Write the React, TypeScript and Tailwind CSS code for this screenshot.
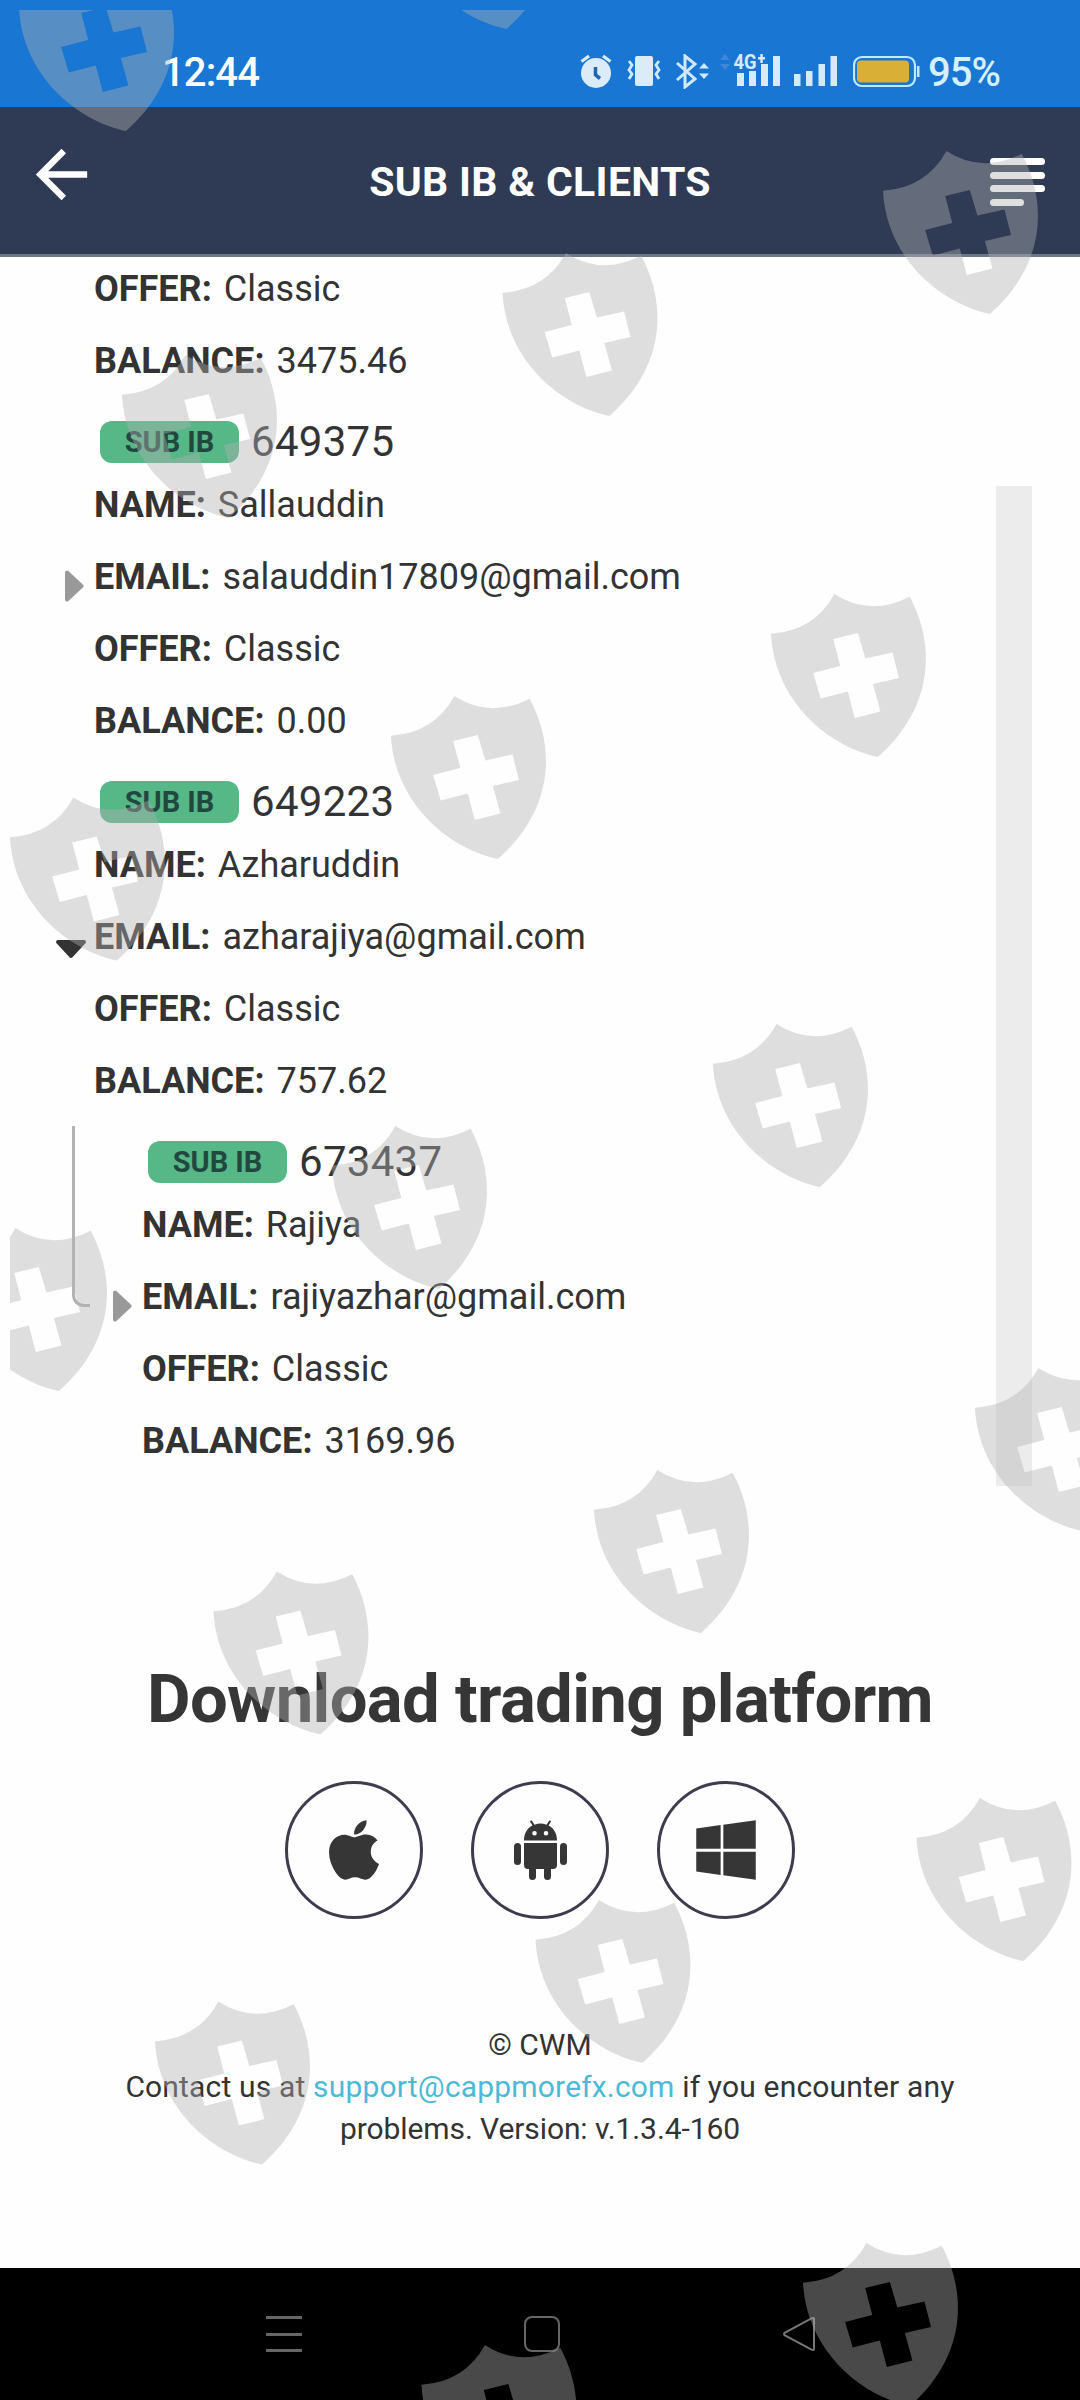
import { FaApple, FaWindows } from "react-icons/fa";

interface Account {
  id: string;
  name: string;
  email: string;
  offer: string;
  balance: string;
  open?: boolean;
  nested?: boolean;
}

const accounts: Account[] = [
  {
    id: "649375",
    name: "Sallauddin",
    email: "salauddin17809@gmail.com",
    offer: "Classic",
    balance: "0.00",
  },
  {
    id: "649223",
    name: "Azharuddin",
    email: "azharajiya@gmail.com",
    offer: "Classic",
    balance: "757.62",
    open: true,
  },
  {
    id: "673437",
    name: "Rajiya",
    email: "rajiyazhar@gmail.com",
    offer: "Classic",
    balance: "3169.96",
    nested: true,
  },
];

// x / y of every shield in the overlay
const shields = [
  [19, -32],
  [399.5, -134],
  [883, 151],
  [502.5, 253],
  [122, 355],
  [771, 594],
  [391, 696],
  [10, 797.5],
  [713, 1024],
  [332, 1126],
  [-48, 1228],
  [975, 1368],
  [594, 1470],
  [213.5, 1571.5],
  [916.5, 1798],
  [535.5, 1900],
  [155, 2001.5],
  [803, 2243],
  [421.5, 2345],
];

function Shields() {
  return (
    <svg
      className="absolute left-0 top-0 pointer-events-none"
      width="1080"
      height="2400"
      viewBox="0 0 1080 2400"
    >
      <defs>
        <clipPath id="inset">
          <rect x="10" y="10" width="1070" height="2390" />
        </clipPath>
      </defs>
      <g clipPath="url(#inset)" fill="#b2b2b2" fillOpacity="0.41" fillRule="evenodd">
        {shields.map(([x, y]) => (
          <path
            key={`${x}-${y}`}
            transform={`translate(${x} ${y}) scale(1.004 1)`}
            d="M0 39.7Q43 37 63.2 0Q98 23 138.2 2.7C165 53 161 115 106.5 163C55 152 3 105 0 39.7ZM62 45L86.5 39L94 64.500L121 58.500L127.500 84L101.500 90L109 117.500L83.500 124L76.500 97.500L49.500 104.500L42 79L69 72Z"
          />
        ))}
      </g>
    </svg>
  );
}

function StatusBar() {
  return (
    <div className="h-[107px] bg-[#1976d2] flex items-start pt-[54px] pl-[162px] text-white">
      <span className="w-[418px] pt-px text-[40px] leading-[36px] tracking-[-0.9px] font-medium">12:44</span>

      <svg width="32" height="34" viewBox="0 0 32 34" fill="#dcebf8">
        <circle cx="16" cy="19" r="15" />
        <path d="M1.500 7.500L9 2M30.500 7.500L23 2" stroke="#dcebf8" strokeWidth="3.200" />
        <path d="M15.500 13V21L20 24.500" fill="none" stroke="#1f66b0" strokeWidth="3.500" />
      </svg>

      <svg className="ml-[15px]" width="34" height="34" viewBox="0 0 34 34">
        <rect x="8" y="2" width="18" height="30" rx="2" fill="#dcebf8" />
        <path
          d="M2 7L5 11L2 16L5 20L2 25M32 7L29 11L32 16L29 20L32 25"
          fill="none"
          stroke="#cfe9ff"
          strokeWidth="2.800"
        />
      </svg>

      <svg className="ml-[14px]" width="34" height="35" viewBox="0 0 34 35">
        <path
          d="M2 9L20 25L10 33V2L20 10L2 26"
          fill="none"
          stroke="#cfe9ff"
          strokeWidth="3"
        />
        <path d="M24 14.500H34L29 9ZM24 19.500H34L29 25Z" fill="#cfe9ff" />
      </svg>

      <svg className="ml-[11px]" width="61" height="36" viewBox="0 -4 61 36" overflow="visible">
        <path d="M0 2H10L5 -4ZM0 6H10L5 12Z" fill="#3f87d9" />
        <g fill="#d5eafc">
          <text x="13.500" y="11" fontSize="20" fontWeight="700" textLength="23" lengthAdjust="spacingAndGlyphs">
            4G
          </text>
          <path d="M38 -1H45V1.500H38ZM40.300 -4H42.800V5H40.300Z" />
          <rect x="17" y="15" width="7" height="13" />
          <rect x="29" y="13" width="7" height="15" />
          <rect x="41" y="6" width="7" height="22" />
          <rect x="53" y="-2" width="7" height="30" />
        </g>
      </svg>

      <svg className="ml-[13px]" width="43" height="32" viewBox="0 0 43 32" fill="#d5eafc">
        <rect x="0" y="20" width="6.500" height="12" />
        <rect x="12" y="17" width="6.500" height="15" />
        <rect x="24.500" y="10" width="6.500" height="22" />
        <rect x="36.500" y="2" width="6.500" height="30" />
      </svg>

      <svg className="ml-4" width="67" height="34" viewBox="0 0 67 34">
        <rect x="1" y="3" width="61" height="29" rx="8" fill="none" stroke="#bfeaff" strokeWidth="2.200" />
        <rect x="4" y="6.500" width="52" height="22" rx="4" fill="#d9b035" />
        <rect x="64" y="12" width="2.500" height="11" fill="#bfeaff" />
      </svg>

      <span className="ml-2 pt-px text-[40px] leading-[36px] tracking-[-1px] font-medium text-[#d5f0ff]">95%</span>
    </div>
  );
}

function Header() {
  return (
    <header className="relative h-[150px] bg-[#2f3a54] border-b-[3px] border-[#6f7785] flex items-start justify-between pl-[23px] pr-[35px]">
      <svg className="mt-[29px]" width="77" height="77" viewBox="0 0 24 24" fill="white">
        <path d="M20 11H7.830l5.590-5.590L12 4l-8 8 8 8 1.410-1.410L7.830 13H20v-2z" />
      </svg>
      <h1 className="absolute inset-x-0 top-[50px] text-center text-[41px] leading-[50px] tracking-[0.3px] font-bold text-white">
        SUB IB &amp; CLIENTS
      </h1>
      <div className="mt-[51px] w-[55px] flex flex-col gap-[6.5px]">
        <span className="h-[7px] rounded-full bg-white" />
        <span className="h-[7px] rounded-full bg-white" />
        <span className="h-[7px] rounded-full bg-white" />
        <span className="h-[7px] w-[34px] rounded-full bg-white" />
      </div>
    </header>
  );
}

function Field({ label, value }: { label: string; value: string }) {
  return (
    <p className="h-[72px] leading-[72px] text-[36px] whitespace-nowrap">
      <span className="font-bold">{label}:</span>
      <span className="ml-3">{value}</span>
    </p>
  );
}

function AccountItem({ account }: { account: Account }) {
  return (
    <div className={account.nested ? "relative pl-12" : "relative"}>
      {account.nested && (
        <div className="absolute left-[-22px] top-[9px] w-[18px] h-[181px] border-l-[3px] border-b-[3px] border-[#b3b3b3] rounded-bl-[12px]" />
      )}
      <div className="h-[72px] flex items-start pt-6 pl-[6px]">
        <span className="w-[139px] h-[42px] rounded-[12px] bg-[#56b787] text-[#21483f] text-[29px] leading-[42px] font-bold text-center">
          SUB IB
        </span>
        <span className="ml-3 text-[42px] leading-[42px] tracking-[0.3px]">{account.id}</span>
      </div>
      <Field label="NAME" value={account.name} />
      <div className="relative">
        {account.open ? (
          <svg className="absolute left-[-39px] top-[38px]" width="32" height="20" viewBox="0 0 32 20">
            <path d="M3 3H29L16 17Z" fill="#333" stroke="#333" strokeWidth="4" strokeLinejoin="round" />
          </svg>
        ) : (
          <svg className="absolute left-[-29px] top-[29px]" width="19" height="32" viewBox="0 0 19 32">
            <path d="M2 2.500V29.500L16.500 16Z" fill="#999" stroke="#999" strokeWidth="4" strokeLinejoin="round" />
          </svg>
        )}
        <Field label="EMAIL" value={account.email} />
      </div>
      <Field label="OFFER" value={account.offer} />
      <Field label="BALANCE" value={account.balance} />
    </div>
  );
}

function AndroidIcon() {
  return (
    <svg width="53" height="60" viewBox="0 0 53 60" fill="currentColor">
      <path
        fillRule="evenodd"
        d="M10 20.500C10 13 13.500 8 18.500 5.500L16 1.500Q16.500 0 17.700 .6L20.500 4.700Q26.500 2.500 32.500 4.700L35.300 .6Q36.500 0 37 1.500L34.500 5.500C39.500 8 43 13 43 20.500ZM20.500 11A2.300 2.300 0 1 0 20.510 15.600A2.300 2.300 0 1 0 20.500 11ZM32 11A2.300 2.300 0 1 0 32.010 15.600A2.300 2.300 0 1 0 32 11Z"
      />
      <path d="M10 23H43V45Q43 49 39 49H37V56.500Q37 60 33.500 60T30 56.500V49H22V56.500Q22 60 18.500 60T15 56.500V49H14Q10 49 10 45Z" />
      <rect x="0" y="23" width="7" height="22" rx="3.500" />
      <rect x="46" y="23" width="7" height="22" rx="3.500" />
    </svg>
  );
}

export default function App() {
  return (
    <div className="relative w-[1080px] h-[2400px] overflow-hidden bg-[#fefefe] flex flex-col font-['Roboto',sans-serif] text-[#333]">
      <StatusBar />
      <Header />

      <main className="h-[2011px] overflow-hidden flex flex-col">
        <div className="h-[1229px] flex justify-between pl-[94px] pr-12">
          <div className="-mt-1">
            <Field label="OFFER" value="Classic" />
            <Field label="BALANCE" value="3475.46" />
            {accounts.map((account) => (
              <AccountItem key={account.id} account={account} />
            ))}
          </div>
          <div className="mt-[229px] w-9 h-[1000px] bg-[#ececec]" />
        </div>

        <h2 className="mt-[173px] text-center text-[67px] leading-[80px] tracking-[-0.65px] font-bold text-[#363636]">
          Download trading platform
        </h2>
        <div className="mt-[42px] flex justify-center gap-12 text-[#363636] text-[68px]">
          <a className="size-[138px] rounded-full border-[3px] border-[#3d3c4e] flex items-center justify-center">
            <FaApple />
          </a>
          <a className="size-[138px] rounded-full border-[3px] border-[#3d3c4e] flex items-center justify-center">
            <AndroidIcon />
          </a>
          <a className="size-[138px] rounded-full border-[3px] border-[#3d3c4e] flex items-center justify-center">
            <FaWindows />
          </a>
        </div>

        <footer className="mt-[105px] text-center text-[30px] leading-[42px]">
          <p>© CWM</p>
          <p className="tracking-[0.17px]">
            Contact us at <a className="text-[#4cbad6]">support@cappmorefx.com</a> if you encounter any
          </p>
          <p className="tracking-[-0.1px]">problems. Version: v.1.3.4-160</p>
        </footer>
      </main>

      <nav className="h-[132px] bg-black flex items-start pt-12 pl-[266px]">
        <div className="w-9 h-9 flex flex-col justify-between">
          <span className="h-[3px] bg-[#666]" />
          <span className="h-[3px] bg-[#666]" />
          <span className="h-[3px] bg-[#666]" />
        </div>
        <div className="ml-[222px] size-9 rounded-[8px] border-2 border-[#666]" />
        <svg className="ml-[221px]" width="36" height="36" viewBox="0 0 36 36">
          <path
            d="M33 3.500V32.500Q33 35 30.500 33.500L4 19.500Q2 18 4 16.500L30.500 2.500Q33 1 33 3.500Z"
            fill="none"
            stroke="#777"
            strokeWidth="2"
          />
        </svg>
      </nav>

      <Shields />
    </div>
  );
}
